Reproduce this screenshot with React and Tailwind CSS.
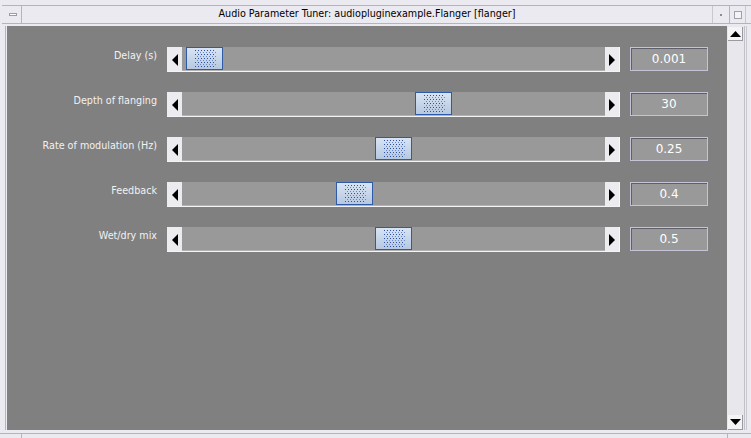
import React from 'react'

const params = [
  { label: 'Delay (s)', value: '0.001', pos: 0.01 },
  { label: 'Depth of flanging', value: '30', pos: 0.604 },
  { label: 'Rate of modulation (Hz)', value: '0.25', pos: 0.5 },
  { label: 'Feedback', value: '0.4', pos: 0.4 },
  { label: 'Wet/dry mix', value: '0.5', pos: 0.5 },
]

function Dots() {
  const dots = []
  for (let r = 0; r < 9; r++) {
    for (let c = 0; c < 7; c++) {
      const x = c * 3 + (r % 2 ? 1.5 : 0)
      if (x > 20) continue
      dots.push(
        <rect key={`${r}-${c}`} x={x} y={r * 2} width="1" height="1" fill={r % 2 ? '#6c88c0' : '#2d50a0'} />
      )
    }
  }
  return (
    <svg width="21" height="18" viewBox="0 0 21 18" shapeRendering="crispEdges">
      {dots}
    </svg>
  )
}

function Arrow({ dir }) {
  const pts = {
    left: '6,0 6,12 0,6',
    right: '0,0 0,12 6,6',
    up: '0,6 11,6 5.5,0',
    down: '0,0 11,0 5.5,6',
  }[dir]
  const horiz = dir === 'left' || dir === 'right'
  return (
    <svg width={horiz ? 6 : 11} height={horiz ? 12 : 6} viewBox={horiz ? '0 0 6 12' : '0 0 11 6'}>
      <polygon points={pts} fill="#000" />
    </svg>
  )
}

function Slider({ pos }) {
  const travel = 386
  return (
    <div className="flex w-[453px] h-[25px] border-b border-b-[#f4f4f6]">
      <div className="w-[15px] h-[24px] bg-[#ecebf0] flex items-center justify-center pl-[1px] pt-[1px]">
        <Arrow dir="left" />
      </div>
      <div className="flex-1 h-[24px] bg-[#999999] border-b border-b-[#b2b2b2]">
        <div
          className="w-[37px] h-[23px] border border-[#2f5aa8] bg-gradient-to-b from-[#d8e4f3] to-[#b6c8e0] flex items-start justify-center pt-[2px] pl-[1px]"
          style={{ marginLeft: Math.round(pos * travel) }}
        >
          <Dots />
        </div>
      </div>
      <div className="w-[15px] h-[24px] bg-[#ecebf0] border-r border-r-[#f8f8fa] flex items-center justify-center pt-[1px]">
        <Arrow dir="right" />
      </div>
    </div>
  )
}

function Row({ p }) {
  return (
    <div className="h-[45px] flex items-start">
      <div className="w-[150px] text-right text-[9.6px] leading-[12px] pt-[3px] text-[#f2f2f2]">{p.label}</div>
      <div className="ml-[10px]">
        <Slider pos={p.pos} />
      </div>
      <div className="ml-[10px] w-[78px] h-[24px] border border-[#c4c4d6] bg-[#999999] shadow-[inset_1px_1px_0_#5e5e6c] flex items-center justify-center text-[12px] text-white">
        {p.value}
      </div>
    </div>
  )
}

export default function App() {
  return (
    <div className="w-[751px] h-[438px] bg-[#ebeaf0] flex flex-col overflow-hidden font-['DejaVu_Sans',sans-serif]">
      {/* title bar */}
      <div className="h-[26px] pt-[5px] pl-[2px]">
        <div className="h-[19px] flex border-t border-b border-[#b4b4bc]">
          <div className="w-[20px] border-r border-[#b4b4bc] flex items-center justify-center pl-[3px]">
            <div className="w-[8px] h-[3px] border border-[#9c9ca4] bg-white" />
          </div>
          <div className="flex-1 flex items-center justify-center text-[9.6px] text-black">
            Audio Parameter Tuner: audiopluginexample.Flanger [flanger]
          </div>
          <div className="w-[17px] border-l border-[#c8c8ce] flex items-center justify-center">
            <div className="w-[2px] h-[2px] bg-[#8c8c94]" />
          </div>
          <div className="w-[16px] border-l border-[#b4b4bc] flex items-center justify-center">
            <div className="w-[8px] h-[8px] border border-[#a0a0a8] bg-[#f4f4f6]" />
          </div>
          <div className="w-[6px] border-l border-[#c8c8ce]" />
        </div>
      </div>

      {/* body */}
      <div className="flex h-[404px]">
        <div className="w-[7px] pl-[5px]">
          <div className="h-full border-l border-[#b4b4bc]" />
        </div>
        <div className="w-[720px] bg-[#808080] pt-[21px]">
          {params.map((p) => (
            <Row key={p.label} p={p} />
          ))}
        </div>
        <div className="w-[18px] bg-[#e8e7ec] border-r border-[#c0c0c8] flex flex-col justify-between pl-[1px] pr-[1px] pt-[1px]">
          <div className="h-[14px] bg-[#f4f4f6] border-r border-b border-[#9a9aa2] flex items-center justify-center">
            <Arrow dir="up" />
          </div>
          <div className="h-[15px] bg-[#f4f4f6] border-r border-b border-[#9a9aa2] flex items-center justify-center">
            <Arrow dir="down" />
          </div>
        </div>
        <div className="w-[6px] pl-[1px]">
          <div className="h-full border-l border-[#c8c8ce]" />
        </div>
      </div>

      {/* bottom edge */}
      <div className="flex-1 pt-[3px]">
        <div className="border-t border-[#b4b4bc] h-full flex">
          <div className="w-[22px] border-r border-[#b4b4bc]" />
          <div className="w-[706px] border-r border-[#b4b4bc]" />
        </div>
      </div>
    </div>
  )
}
